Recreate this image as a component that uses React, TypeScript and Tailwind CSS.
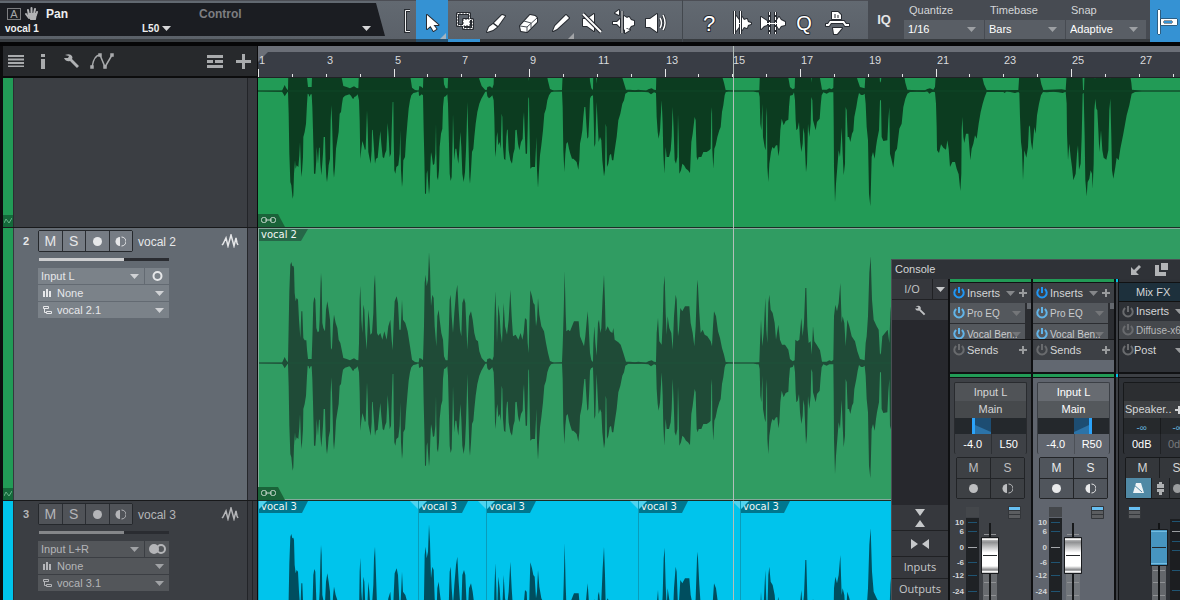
import { useState } from "react";
import type { ReactNode } from "react";

type Segment = { offset: number; points: string };

// Envelope samples, three units per pixel. Each pair is "time,amplitude".
const UPPER: Segment[] = [
	{ offset: -24, points: "24,1 96,1 100,9 104,18 108,10 112,4 114,4 116,110 118,215 121,295 124,303 127,290 130,292 132,285 134,210 137,185 140,195 144,190 147,130 151,75 154,155 157,155 160,75 164,68 169,68 171,40 174,12 179,12 185,12 187,70 190,180 193,198 196,190 199,105 203,92 207,95 209,130 211,220 213,270 215,240 217,120 220,105 225,95 228,160 232,185 236,160 240,130 243,40 246,45 249,115 252,145 257,120 262,105 266,70 271,60 276,35 280,15 290,12 300,8 312,14 320,9 325,8 327,60 329,190 331,232 334,130 337,90 340,175 343,160 346,90 350,40 355,160 358,130 361,85 366,90 370,150 372,230 375,265 378,180 381,90 385,82 391,90 397,70 403,95 410,70 415,110 421,130 425,70 428,38 431,120 434,185 440,200 444,180 448,100 452,100 456,190 459,130 466,120 473,95 480,50 486,10 495,3 503,1 506,1 508,15 514,13 519,8 522,110 524,240 527,265 530,230 534,250 537,332 540,280 543,170 547,205 551,195 554,110 559,50 562,140 566,160 569,130 574,90 579,70 582,20 587,8 593,8 596,80 599,190 602,205 605,140 609,90 613,150 618,210 622,235 626,160 630,100 634,80 637,180 642,195 646,180 649,110 652,40 657,140 663,155 668,130 673,90 678,70 684,65 688,35 695,15 705,4 710,2 712,12 720,14 727,8 731,20 733,130 736,215 739,140 741,60 745,175 749,140 752,90 756,60 761,180 765,110 771,85 776,130 781,220 785,140 789,80 797,85 805,70 812,90 817,70 821,90 825,135 830,130 833,60 836,30 839,150 841,218 846,200 850,180 854,175 858,110 861,130 864,195 868,145 874,110 882,95 888,60 894,30 900,6 912,1 936,2 938,50 941,150 944,275 947,150 949,95 955,100" },
	{ offset: 936, points: "0,95 6,110 12,125 26,125 30,80 36,65 42,50 46,80 50,125 53,155 56,110 60,30 64,8 69,3 70,60 73,110 76,60 80,22 84,120 87,130 91,90 94,105 98,200 102,265 105,180 107,95 113,110 120,95 127,90 130,105 134,70 145,62 152,55 160,30 168,4 180,4 195,2 205,4 228,1 235,5 245,8 252,4 258,3 260,90 264,135 268,65 275,55 278,120 281,230 284,262 287,150 290,85 293,140 298,105 304,90 308,40 312,140 317,205 320,190 324,80 327,100 331,165 337,155 345,170 358,170 362,120 368,90 373,50 377,110 381,230 383,250 388,150 392,90 398,100 404,85 412,80 422,65 426,50 429,110 432,155 438,140 444,95 450,75 456,45 462,25 467,3 490,1 555,1 568,2 570,60 573,130 577,50 581,90 586,195 589,100 592,60 595,180 598,205 602,160 608,150 614,120 618,70 625,115 630,70 636,55 645,55 655,40 660,12 668,5 674,8 676,70 682,65 688,70 694,135 698,80 702,120 706,225 709,225 712,110 716,60 722,65 725,25 729,110 733,65 740,55 750,38 756,4 770,4 778,8 785,5 790,10 792,140 796,175 801,155 806,180 811,240 815,120 818,140 823,120 827,50 832,130 838,110 845,80 855,65 862,35 870,12 884,8 887,60 890,80 894,140 898,270 902,320 906,190 911,130 920,110 926,100 930,25 933,30 937,80 945,90 953,100 958,60 962,170" },
	{ offset: 1296, points: "606,100 625,70 640,60 646,25 652,4 680,2 705,2 712,6 720,8 730,4 735,12 738,60 870,60 876,45 882,20 890,3 940,2 985,3 988,50 1048,50 1054,20 1060,3 1115,5 1127,3 1130,50 1177,60 1179,3 1182,3 1184,60 1212,60 1215,35 1218,60 1258,60 1260,35 1262,60 1318,60 1324,25 1326,4 1355,1 1470,1" },
];

const LOWER: Segment[] = [
	{ offset: -24, points: "24,1 96,2 100,8 104,16 108,10 112,4 114,2 116,68 118,188 121,273 124,283 126,303 128,323 130,313 132,248 135,208 137,233 140,223 145,228 148,193 150,153 153,238 155,258 157,228 159,198 160,138 164,123 168,98 171,38 173,8 176,10 178,18 182,10 185,10 187,48 189,118 191,198 192,248 196,248 199,208 200,168 204,218 207,170 209,170 211,218 214,253 216,228 219,188 221,138 225,138 227,218 229,258 231,273 234,248 236,223 240,203 242,88 244,43 246,88 248,158 250,238 252,260 255,228 258,173 262,148 266,123 269,68 273,63 276,38 279,20 285,14 292,12 298,10 303,14 307,22 310,24 313,18 318,16 323,10 327,28 329,88 331,203 334,173 337,150 341,163 345,178 347,173 349,118 351,58 353,108 355,183 359,203 362,218 365,178 366,118 368,116 371,158 375,218 378,203 383,200 387,158 391,120 394,158 398,198 402,202 405,188 409,178 411,138 413,96 416,138 419,198 423,188 426,88 428,33 430,33 431,138 433,238 436,248 439,228 445,223 449,188 451,118 453,238 456,288 458,268 460,208 465,198 468,148 472,98 476,53 480,28 484,13 490,6 500,4 503,1 506,1 507,14 510,14 515,10 519,13 521,118 523,198 525,308 528,308 530,248 532,238 534,268 537,310 539,288 541,228 543,183 546,198 549,223 553,218 556,188 558,98 559,178 561,258 564,268 567,238 569,168 573,128 577,113 579,48 582,18 587,16 592,10 594,38 596,118 599,248 602,270 605,258 608,138 609,68 611,138 613,208 616,173 619,173 622,198 625,218 628,178 631,123 634,168 637,248 641,273 645,243 648,178 650,118 652,33 655,138 658,258 660,278 663,238 666,183 670,173 673,138 677,98 682,63 688,38 694,23 700,13 705,4 707,1 710,1 712,16 717,22 722,18 727,13 731,28 733,78 735,178 737,198 740,138 742,123 745,163 749,153 752,173 755,68 757,78 759,168 762,203 766,208 769,138 771,116 773,116 776,178 781,208 786,218 790,188 794,173 796,118 800,116 804,158 808,178 813,153 818,143 820,88 822,63 824,118 827,188 831,188 833,118 835,18 837,23 839,138 841,233 846,228 851,228 855,228 858,168 859,138 861,238 864,290 867,238 870,193 874,163 879,118 883,68 888,53 892,28 897,13 903,4 912,1 936,1 938,48 940,178 943,243 946,188 949,158 953,153 957,173 961,188 966,203 970,203 975,208 980,213 985,236 988,208 990,158 994,138 997,118 1000,78 1003,48 1006,48 1009,98 1012,143 1015,138 1018,78 1020,23 1023,16 1026,14 1029,13 1031,78 1033,168 1036,158 1038,88 1040,33 1043,98 1046,153 1050,138 1054,148 1057,208 1062,256 1065,238 1067,98 1069,108 1071,228 1075,218 1079,193 1083,188 1086,208 1090,208 1094,178 1100,138 1105,88 1111,68 1117,38 1122,28 1126,8 1135,2 1155,3 1175,2 1195,4 1203,10 1212,4 1218,6 1220,78 1223,123 1226,143 1230,118 1235,28 1238,98 1240,188 1243,248 1247,168 1250,198 1257,198 1262,178 1265,138 1268,48 1271,118 1274,208 1278,218 1282,198 1284,68 1286,138 1288,248 1293,238 1297,218 1302,223 1308,233 1314,238" },
	{ offset: 1296, points: "0,246 4,153 8,128 14,78 17,88 20,198 23,208 26,198 34,198 40,183 50,183 58,178 62,173 64,68 66,48 67,178 70,233 73,173 77,163 82,138 88,118 92,108 96,63 100,43 104,13 107,4 115,1 190,1 200,4 206,4 209,18 211,98 214,118 217,38 219,138 224,168 227,178 229,78 231,48 232,228 235,273 238,218 243,183 247,168 252,173 258,163 262,163 265,196 268,178 271,118 275,83 281,103 287,90 295,86 297,48 300,14 308,12 312,4 315,28 317,88 319,118 323,113 327,93 330,148 334,183 338,158 340,110 343,128 346,198 348,243 351,218 354,98 358,138 362,98 364,18 367,28 369,88 373,103 377,118 381,93 389,83 392,43 395,13 400,4 410,8 418,4 430,4 431,88 432,228 435,333 438,278 442,228 446,178 450,198 455,110 458,188 461,253 465,218 467,48 470,58 473,138 477,138 481,153 486,128 490,120 493,78 499,48 503,23 507,6 513,12 519,12 524,8 527,38 530,108 534,148 537,308 541,346 543,278 545,198 549,183 554,203 558,168 561,148 567,118 570,28 573,28 575,138 580,150 592,148 595,88 598,48 600,188 604,203 610,230 615,183 621,173 628,113 635,98 640,48 646,23 652,8 660,3 680,2 705,3 708,1 712,1 718,8 724,4 730,2 735,4 738,38 740,108 741,178 747,186 753,160 760,170 768,176 772,148 776,173 780,228 787,213 795,213 800,233 806,250 811,300 814,248 815,118 817,78 820,138 823,156 828,128 835,128 838,168 841,208 845,173 850,158 855,133 860,143 866,98 872,63 878,38 884,18 890,3 940,3 944,6 950,1 975,6 985,3 988,6 990,78 993,153 996,178 999,268 1003,178 1009,200 1014,168 1017,103 1020,108 1023,153 1027,178 1033,108 1037,128 1041,73 1047,38 1053,13 1059,3 1070,4 1090,2 1105,4 1118,6 1127,2 1130,38 1131,128 1134,208 1138,158 1142,198 1146,228 1150,268 1157,248 1161,188 1164,163 1167,236 1172,218 1175,138 1178,8 1181,6 1184,138 1186,268 1190,316 1193,273 1198,263 1202,238 1206,248 1208,293 1211,218 1213,58 1216,23 1219,53 1222,58 1225,118 1228,183 1233,118 1237,178 1241,200 1249,206 1255,178 1258,58 1261,23 1264,138 1266,238 1270,263 1276,228 1280,200 1286,208 1291,173 1300,128 1310,73 1318,43 1325,8 1335,3 1355,1 1470,1" },
];

const envelope = (segments: Segment[], sign: number) =>
	segments
		.flatMap(({ offset, points }) =>
			points.split(" ").map((pair) => {
				const [x, y] = pair.split(",").map(Number);
				return `${x + offset},${y * sign}`;
			})
		)
		.join("L");

const UPPER_PATH = `M0,0L${envelope(UPPER, -1)}L2766,0Z`;
const LOWER_PATH = `M0,0L${envelope(LOWER, 1)}L2766,0Z`;

const Waveform = ({ height, center, color }: { height: number; center: number; color: string }) => (
	<svg width={922} height={height} viewBox={`0 ${-center * 3} 2766 ${height * 3}`} fill={color} className="block max-w-none" aria-hidden="true">
		<path d={UPPER_PATH} />
		<path d={LOWER_PATH} />
		<path d="M0 0H2766" stroke={color} strokeWidth={3} />
		<path d="M0 0H2766" stroke="#2c9b5e" strokeWidth={2} opacity={0.16} />
	</svg>
);

const Caret = ({ className = "" }: { className?: string }) => (
	<svg width="9" height="5" viewBox="0 0 9 5" fill="currentColor" className={`pointer-events-none shrink-0 ${className}`} aria-hidden="true">
		<path d="M0 0h9L4.500 5z" />
	</svg>
);

const Wrench = () => (
	<svg width="16" height="16" viewBox="0 0 16 16" aria-hidden="true">
		<path d="M1 2q5-2 7 1 1 2 0 3l7 7-2 2-7-7q-4 1-6-3h4l1-2z" fill="#b0b2b4" />
	</svg>
);

const Half = () => (
	<svg width="11" height="11" viewBox="0 0 11 11" aria-hidden="true">
		<path d="M5 1a4.500 4.500 0 0 0 0 9z" fill="currentColor" />
		<path d="M6.500 1a4.500 4.500 0 0 1 0 9" fill="none" stroke="currentColor" />
	</svg>
);

const Dot = () => <span className="size-[9px] rounded-full bg-current" />;

const Power = ({ color }: { color: string }) => (
	<svg width="12" height="12" viewBox="0 0 12 12" fill="none" stroke={color} strokeWidth="2" className="shrink-0" aria-hidden="true">
		<path d="M3.200 2a4.700 4.700 0 1 0 5.600 0M6 0v6" />
	</svg>
);

const Plus = () => (
	<svg width="8" height="8" viewBox="0 0 8 8" stroke="currentColor" strokeWidth="2" className="shrink-0" aria-hidden="true">
		<path d="M4 0v8M0 4h8" />
	</svg>
);

const Tool = ({ label, className = "w-8", children }: { label: string; className?: string; children: ReactNode }) => (
	<button aria-label={label} className={`h-[42px] shrink-0 overflow-hidden ${className}`}>
		<svg width="32" height="39" viewBox="0 0 32 39" fill="#fff" stroke="#272b31" strokeWidth="2" strokeLinejoin="round" className="block max-w-none" style={{ paintOrder: "stroke" }}>
			{children}
		</svg>
	</button>
);

const ToolSelect = ({ label, options }: { label: string; options: string[] }) => {
	const id = label.toLowerCase();
	return (
		<div className="flex w-20 flex-col">
			<label htmlFor={id} className="h-5 pl-[5px] text-[11px] leading-5 text-[#d4d6d8]">{label}</label>
			<div className="relative">
				<select id={id} className="block h-[19px] w-full appearance-none bg-[#595e65] pl-1 text-[11px] text-white outline-none">
					{options.map((option) => <option key={option}>{option}</option>)}
				</select>
				<Caret className="absolute top-[7px] right-2 text-[#9da0a4]" />
			</div>
		</div>
	);
};

const ParameterDisplay = () => (
	<div className="relative mt-[3px] h-[33px] w-[385px] shrink-0 bg-[#1b1d22] text-[#eeeff0] [clip-path:polygon(0_0,376px_0,385px_100%,0_100%)]">
		<div className="flex h-[19px] items-center pt-[3px] pl-[7px] text-xs font-bold">
			<span className="flex h-3 w-[14px] items-center justify-center border border-[#7c7d80] text-[11px] font-normal text-[#a5a6a8]">A</span>
			<svg width="14" height="14" viewBox="0 0 14 14" className="ml-1" fill="none" stroke="#b2b3b5" strokeWidth="2" strokeLinecap="round" aria-hidden="true">
				<path d="M4 8L3 3M6.500 7V1M9 7l1-5M11 8l1-3M1 7l3 4" />
				<path d="M4 7h7l-1 5H6z" fill="#b2b3b5" />
			</svg>
			<span className="ml-[7px] w-[153px]">Pan</span>
			<span className="text-[#7d7e81]">Control</span>
		</div>
		<div className="flex h-[13px] items-center pl-[5px] text-[10px] font-bold">
			<span className="w-[137px]">vocal 1</span>
			<button className="flex w-[220px] items-center gap-[3px]">L50 <Caret className="text-[#d5d6d7]" /></button>
			<button aria-label="Control parameter"><Caret className="text-[#d5d6d7]" /></button>
		</div>
	</div>
);

const Toolbar = () => (
	<header className="h-[46px] shrink-0 bg-[#060607] pb-1">
		<div className="flex h-[42px] overflow-hidden bg-[linear-gradient(#4c4e55_1px,#626971_1px,#5b6169_39px,#383c40_39px)]">
			<ParameterDisplay />
			<svg width="31" height="39" viewBox="0 0 31 39" fill="none" className="shrink-0" aria-hidden="true">
				<path d="M25 10.500h-4.500v21H25" stroke="#272b31" strokeWidth="3" />
				<path d="M25 10.500h-4.500v21H25" stroke="#f0f1f2" />
			</svg>
			<Tool label="Arrow" className="w-8 bg-[linear-gradient(#3592d3_39px,#27516f_39px)]">
				<path d="M11 13v14l3.500-3 3 5 3-2-3-4h5z" />
				<path d="M30 31v6h-6z" fill="#a4b3bf" stroke="none" />
			</Tool>
			<Tool label="Range" className="w-8 border-b-[3px] border-[#3592d3]">
				<g fill="none">
					<path d="M9.500 13.500h12v12h-12zM15.500 19.500h9v9h-9z" strokeWidth="3" />
					<path d="M9.500 13.500h12v12h-12zM15.500 19.500h9v9h-9z" stroke="#fff" strokeWidth="1" strokeDasharray="2 1" />
				</g>
				<path d="M16 20h5v5h-5z" stroke="none" />
			</Tool>
			<Tool label="Split">
				<path d="M22 13l3 1-7 10-4-3z" />
				<path d="M13 22l4 3-4 3-6 2 2-5z" />
			</Tool>
			<Tool label="Eraser">
				<path d="M18 13l5 1 2 2v4L15 30l-6-1-1-5z" />
				<path d="M8 24l7 1 10-9M15 25v5M12 19l7 2v5" fill="none" stroke="#4a4f56" strokeWidth="1" />
			</Tool>
			<Tool label="Paint">
				<path d="M22 13l3 3-12 11-4 2 2-5z" />
				<path d="M30 31v6h-6z" fill="#a2a4a7" stroke="none" />
			</Tool>
			<Tool label="Mute">
				<path d="M7 17h4l7-5v17l-7-5H7z" />
				<path d="M7 12l18 18" fill="none" strokeWidth="4" />
				<path d="M7 12l18 18" fill="none" stroke="#fff" strokeWidth="2" />
			</Tool>
			<Tool label="Bend">
				<path d="M5 20h4l3-3v8l-3-3H5zM16 14l3 2 2-1 2 3 3 1v4l-3 1-2 3-2-1-3 2zM11 8v5l-4-2zM17 26l5 2-5 3z" />
				<path d="M14 9v22" strokeWidth="3" />
				<path d="M14 9v22" stroke="#fff" strokeWidth="1" />
			</Tool>
			<Tool label="Listen">
				<path d="M6 17h4l7-5v18l-7-5H6z" />
				<path d="M20 16q3 5 0 10M23 13q4 8 0 15" fill="none" strokeWidth="3" />
				<path d="M20 16q3 5 0 10M23 13q4 8 0 15" fill="none" stroke="#fff" strokeWidth="1.500" />
			</Tool>
			<div className="mr-[10px] ml-[10px] w-px shrink-0 bg-[#43484e]" />
			<Tool label="Help"><text x="16" y="29" textAnchor="middle" fontSize="22">?</text></Tool>
			<Tool label="Audio bend">
				<path d="M11 14l3 4v7l-3 4zM17 15l2 3 3-1 1 3 3 1v1l-3 1-1 3-3-1-2 3z" />
				<path d="M9.500 9v23M15.500 9v23" strokeWidth="3" />
				<path d="M9.500 9v23M15.500 9v23M12 21.500h4" stroke="#fff" strokeWidth="1" />
			</Tool>
			<Tool label="Strip silence">
				<path d="M4 15l3 2 3 2v4l-3 1-3 3zM20 18l2-3 2 3 4 2v3l-4 1-2 3-2-3z" />
				<path d="M12.500 10v22M18.500 10v22" strokeWidth="3" />
				<path d="M12.500 10v22M18.500 10v22" stroke="#fff" strokeWidth="1" strokeDasharray="3 2" />
				<path d="M10 21.500h10" stroke="#fff" strokeWidth="1" />
			</Tool>
			<Tool label="Quantize panel"><text x="15" y="28" textAnchor="middle" fontSize="20">Q</text></Tool>
			<Tool label="Macros">
				<path d="M11 10h6l3 3v4h-9z" />
				<path d="M14 12v4M17 13v3" strokeWidth="1" />
				<path d="M5 24h3l2-3h12l2 3h4v-2h-3l-2-3H9l-2 3H5zM12 26h9l-5 6h-3z" />
			</Tool>
			<div className="ml-[15px] flex h-[39px] grow bg-[#474b52]">
				<button className="w-9 shrink-0 pr-1 text-[13px] font-bold text-[#e4e5e6]">IQ</button>
				<div className="flex gap-px">
					<ToolSelect label="Quantize" options={["1/16", "1/8", "1/4"]} />
					<ToolSelect label="Timebase" options={["Bars", "Seconds", "Frames"]} />
					<ToolSelect label="Snap" options={["Adaptive", "Bar", "Quantize"]} />
				</div>
			</div>
			<Tool label="Snap to grid" className="w-[30px] bg-[#3592d3]">
				<path d="M8 8h2v24H8zM11 17h16v6H11z" strokeWidth="1" />
				<path d="M14 19h8v2h-8z" fill="#3592d3" strokeWidth="1" />
			</Tool>
		</div>
	</header>
);

const TrackListHeader = () => (
	<div className="flex h-8 items-center border-b-2 border-[#0c0c0d] bg-[#27292c] text-[#a9abad]">
		<button aria-label="Track list" className="ml-[5px]">
			<svg width="16" height="12" viewBox="0 0 16 12" stroke="currentColor" strokeWidth="2"><path d="M0 1h16M0 4.500h16M0 8h16M0 11.500h16" /></svg>
		</button>
		<button aria-label="Inspector" className="ml-[17px]">
			<svg width="4" height="16" viewBox="0 0 4 16" fill="currentColor"><path d="M0 1h4v3H0zM0 6h4v10H0z" /></svg>
		</button>
		<button aria-label="Options" className="ml-[19px]"><Wrench /></button>
		<button aria-label="Automation" className="ml-[10px]">
			<svg width="24" height="16" viewBox="0 0 24 16" fill="none" stroke="currentColor" strokeWidth="1.500">
				<path d="M2 14Q4 2 10 2l5 12 7-12" />
				<path d="M1 13h2v2H1zM9 1h2v2H9zM14 13h2v2h-2zM21 1h2v2h-2z" fill="currentColor" />
			</svg>
		</button>
		<button aria-label="Track presets" className="ml-[93px]">
			<svg width="16" height="13" viewBox="0 0 16 13" stroke="currentColor" strokeWidth="3"><path d="M0 1.500h16M0 6.500h6M8 6.500h8M0 11.500h16" /></svg>
		</button>
		<button aria-label="Add track" className="ml-[13px]">
			<svg width="15" height="15" viewBox="0 0 15 15" stroke="currentColor" strokeWidth="3"><path d="M7.500 0v15M0 7.500h15" /></svg>
		</button>
	</div>
);

const AutomationTab = () => (
	<button aria-label="Show automation" className="absolute bottom-0 left-0 flex h-3 w-[10px] items-center justify-center bg-[#14693a]">
		<svg width="8" height="6" viewBox="0 0 8 6" fill="none" stroke="#67b388"><path d="M0 5l2-4 3 4 3-5" /></svg>
	</button>
);

type Track = { number: number; name: string; input: string; take: string; stereo: boolean; selected: boolean };

const SlotSelect = ({ label, value, selected, icon }: { label: string; value: string; selected: boolean; icon?: ReactNode }) => (
	<div className={`relative h-4 min-w-0 grow ${selected ? "bg-[#7b8289]" : "bg-[#53565a]"}`}>
		{icon && <span className="pointer-events-none absolute top-1 left-[5px]">{icon}</span>}
		<select aria-label={label} className={`block h-4 w-full appearance-none bg-transparent text-[11px] leading-4 outline-none ${icon ? "pl-[19px]" : "pl-[3px]"}`}>
			<option>{value}</option>
		</select>
		<Caret className="absolute top-[6px] right-[5px] opacity-80" />
	</div>
);

const TrackControls = ({ track }: { track: Track }) => {
	const { selected } = track;
	const [volume, setVolume] = useState(65);
	const cell = `flex items-center justify-center ${selected ? "bg-[#767c84]" : "bg-[#505358]"}`;

	return (
		<div className={`flex grow pt-[2px] ${selected ? "bg-[#636a72] text-[#e6e7e9]" : "bg-[#3b3e43] text-[#b4b5b8]"}`}>
			<span className="w-6 pl-[9px] text-[11px] leading-[22px] font-bold">{track.number}</span>
			<div className="grow">
				<div className="flex h-[22px] items-center">
					<div className="grid h-[22px] w-[95px] grid-cols-4 gap-px rounded-xs border border-[#25282c] bg-[#2b2e33] text-sm">
						<button className={cell}>M</button>
						<button className={cell}>S</button>
						<button aria-label="Record" className={cell}><Dot /></button>
						<button aria-label="Monitor" className={cell}><Half /></button>
					</div>
					<span className="ml-[5px] grow pt-px text-xs">{track.name}</span>
					<svg width="18" height="14" viewBox="0 0 18 14" fill="none" stroke="currentColor" strokeWidth="1.500" className="mr-2" aria-hidden="true">
						<path d="M1 11l1-1 3-6 2 8 3-11 3 11 2-8 1 5 1 2" />
					</svg>
				</div>
				<div className="relative mt-[6px] ml-px h-[3px] w-[130px] bg-[#2a2c31]">
					<div className={`h-full ${selected ? "bg-[#cdced0]" : "bg-[#85878a]"}`} style={{ width: `${volume}%` }} />
					<input type="range" aria-label={`${track.name} volume`} value={volume} onChange={(e) => setVolume(Number(e.target.value))} className="absolute inset-0 h-full w-full opacity-0" />
				</div>
				<div className="mt-[7px] flex w-[131px] flex-col gap-px">
					<div className="flex gap-px">
						<SlotSelect label="Input" value={track.input} selected={selected} />
						<button aria-label="Channel mode" className={`flex h-4 w-6 items-center justify-center ${selected ? "bg-[#7b8289]" : "bg-[#53565a]"}`}>
							<svg width="17" height="10" viewBox="0 0 17 10" fill="none" stroke="currentColor" strokeWidth="2">
								{track.stereo ? <><circle cx="5" cy="5" r="4" fill="currentColor" /><circle cx="12" cy="5" r="4" /></> : <circle cx="8.500" cy="5" r="4" />}
							</svg>
						</button>
					</div>
					<SlotSelect
						label="Instrument"
						value="None"
						selected={selected}
						icon={<svg width="8" height="8" viewBox="0 0 8 8" stroke="currentColor" strokeWidth="2"><path d="M1 2v6M4 0v8M7 2v6" /></svg>}
					/>
					<SlotSelect
						label="Layer"
						value={track.take}
						selected={selected}
						icon={<svg width="9" height="8" viewBox="0 0 9 8" fill="none" stroke="currentColor"><path d="M.5.5h5v2h-5zM3.500 5.500h5v2h-5zM1.500 3v3.500h2" /></svg>}
					/>
				</div>
			</div>
		</div>
	);
};

const TrackList = () => (
	<aside className="flex w-[258px] shrink-0 flex-col border-r border-l-[3px] border-[#0c0c0d]">
		<TrackListHeader />
		<div className="relative flex h-[150px] shrink-0 border-b border-[#18191b] bg-[#3b3e43]">
			<div className="w-[11px] border-r border-[#2b2d31] bg-[#229b56]" />
			<div className="grow" />
			<div className="w-[10px] border-l border-[#222428] bg-[#37393e]" />
			<AutomationTab />
		</div>
		<div className="relative flex h-[273px] shrink-0 border-b border-[#18191b]">
			<div className="w-[11px] border-r border-[#35383d] bg-[#229b56]" />
			<TrackControls track={{ number: 2, name: "vocal 2", input: "Input L", take: "vocal 2.1", stereo: false, selected: true }} />
			<div className="w-[10px] border-l border-[#25272b] bg-[#474952]" />
			<AutomationTab />
		</div>
		<div className="flex min-h-0 grow overflow-hidden">
			<div className="w-[11px] shrink-0 border-r border-[#2b2d31] bg-[#00c4ec]" />
			<TrackControls track={{ number: 3, name: "vocal 3", input: "Input L+R", take: "vocal 3.1", stereo: true, selected: false }} />
			<div className="w-[10px] shrink-0 border-l border-[#222428] bg-[#37393e]"><div className="ml-1 h-full w-px bg-[#222428]" /></div>
		</div>
	</aside>
);

const BAR_WIDTH = 33.875;

const Ruler = () => (
	<div className="h-8 shrink-0 overflow-hidden border-t-[6px] border-b border-t-[#6b6f77] border-b-[#202225] bg-[#393d45]">
		<svg width="922" height="25" viewBox="0 0 922 25" fontSize="11" fill="#d8dadc" className="block max-w-none">
			<path d="M0 0h10L0 10z" fill="#6b6f77" />
			{Array.from({ length: 28 }, (_, i) => {
				const x = Math.round(i * BAR_WIDTH);
				const top = i % 4 == 0 ? 17 : 22;
				return (
					<g key={i}>
						<rect x={x} y={top} width="1" height={25 - top} fill="#e6e7e8" />
						{i % 2 == 0 && <text x={x + 1} y="12">{i + 1}</text>}
					</g>
				);
			})}
		</svg>
	</div>
);

const LinkBadge = () => (
	<div className="absolute bottom-0 left-0 flex h-[13px] w-[27px] items-center bg-[#1a6339] pb-px pl-[3px] [clip-path:polygon(0_0,20px_0,27px_100%,0_100%)]">
		<svg width="15" height="6" viewBox="0 0 15 6" fill="none" stroke="#c5d5cb" aria-hidden="true">
			<rect x=".5" y=".5" width="5" height="5" rx="2" />
			<rect x="9.500" y=".5" width="5" height="5" rx="2" />
			<path d="M4 3h7" />
		</svg>
	</div>
);

const ClipLabel = ({ name, color }: { name: string; color: string }) => (
	<div className={`h-[12px] w-[49px] pl-[2px] font-['DejaVu_Sans',sans-serif] text-[10px] leading-[11px] whitespace-nowrap text-[#f1f5f3] ${color}`}>{name}</div>
);

// Start and width of each take on the third track; the last one runs on
const TAKES = [
	{ start: 0, width: 160 },
	{ start: 160, width: 68 },
	{ start: 228, width: 152 },
	{ start: 380, width: 102 },
	{ start: 482, width: 440 },
];

const Arrangement = () => (
	<main className="relative flex min-w-0 grow flex-col overflow-hidden">
		<Ruler />
		<div className="relative h-[150px] shrink-0 overflow-hidden border-b border-[#1c2e26] bg-[#229b56]">
			<Waveform height={149} center={13} color="#0c3c20" />
			<LinkBadge />
		</div>
		<div className="relative h-[273px] shrink-0 overflow-hidden border-b border-[#1c2e26] bg-[#309c62]">
			<Waveform height={272} center={135} color="#1f4b37" />
			<div className="absolute inset-0 border-y border-l border-[#84a99b]" />
			<div className="absolute top-px left-px"><ClipLabel name="vocal 2" color="bg-[#266748] [clip-path:polygon(0_0,100%_0,42px_100%,0_100%)]" /></div>
			<LinkBadge />
		</div>
		<div className="relative min-h-0 grow overflow-hidden bg-[#00c4ec]">
			<Waveform height={110} center={134} color="#004e5f" />
			{TAKES.map(({ start, width }) => (
				<div key={start} className="absolute inset-y-0 border-l border-[#0a9cba]" style={{ left: start, width }}>
					<ClipLabel name="vocal 3" color="bg-[#00768e] [clip-path:polygon(7px_0,100%_0,43px_100%,0_100%,0_8px)]" />
					<span className="absolute top-0 left-0 size-2 bg-[#4fd3ef] [clip-path:polygon(0_0,100%_0,0_100%)]" />
					<span className="absolute top-0 right-0 size-2 bg-[#4fd3ef] [clip-path:polygon(0_0,100%_0,100%_100%)]" />
				</div>
			))}
		</div>
		<div className="pointer-events-none absolute inset-y-0 left-[475px] w-px bg-[#b3beb9]" />
	</main>
);

const SCALE = [
	{ label: "10", y: 22 },
	{ label: "6", y: 31 },
	{ label: "0", y: 47 },
	{ label: "-6", y: 62 },
	{ label: "-12", y: 75 },
	{ label: "-24", y: 91 },
];

const FaderCap = ({ x, y, fill, edge }: { x: number; y: number; fill: string; edge: string }) => (
	<g>
		<rect x={x} y={y} width="18" height="37" rx="1" fill="#191b1e" />
		<rect x={x + 1} y={y + 1} width="16" height="35" fill={fill} />
		<path d={`M${x + 1} ${y + 2.5}h16M${x + 1} ${y + 34.5}h16`} stroke={edge} />
		<path d={`M${x + 2} ${y + 18.5}h14`} stroke="#24272a" />
	</g>
);

const RoutingGlyph = ({ x }: { x: number }) => (
	<g>
		<rect x={x - 1} y="6" width="13" height="13" rx="1" fill="#33363a" />
		<rect x={x} y="7" width="11" height="3" fill="#67bff2" />
		<path d={`M${x} 12.500h11M${x} 16.500h11`} stroke="#5b5d60" strokeWidth="3" />
	</g>
);

const Fader = ({ name }: { name: string }) => {
	const [level, setLevel] = useState(70);
	return (
		<div className="relative pt-px">
			<svg width="81" height="110" viewBox="0 0 81 110" fontSize="8" fontWeight="bold" fill="#d3d5d7" className="block">
				<defs>
					<linearGradient id="cap" x2="0" y2="1">
						<stop offset="0" stopColor="#d8d8d8" />
						<stop offset=".12" stopColor="#8f9092" />
						<stop offset=".42" stopColor="#fff" />
						<stop offset=".8" stopColor="#fff" />
						<stop offset=".9" stopColor="#8f9092" />
						<stop offset="1" stopColor="#d8d8d8" />
					</linearGradient>
				</defs>
				<rect x="16" y="7" width="13" height="10" fill="#44474b" />
				<rect x="16" y="18" width="13" height="92" fill="#1f2225" />
				<path d="M33 74h14v36H33z" fill="#7b7d80" opacity=".7" />
				<path d="M34 34.500h12M34 37.500h12M34 82.500h12M34 95.500h12" stroke="#8f9194" />
				<rect x="39" y="23" width="2" height="87" fill="#17191b" />
				{SCALE.map(({ label, y }) => (
					<g key={label}>
						<text x="14" y={y + 3} textAnchor="end">{label}</text>
						<rect x="18" y={y} width="9" height="1" fill={label == "0" ? "#a4a7aa" : "#1f5472"} />
					</g>
				))}
				<RoutingGlyph x={59} />
				<FaderCap x={31} y={37} fill="url(#cap)" edge="#f6f6f6" />
			</svg>
			<input type="range" aria-label={`${name} level`} value={level} onChange={(e) => setLevel(Number(e.target.value))} className="absolute inset-y-0 left-[31px] w-[18px] opacity-0" />
		</div>
	);
};

const InsertRow = ({ name }: { name: string }) => (
	<div className="relative flex h-5 shrink-0 items-center bg-[#54585d] pl-[3px] text-[10px] text-[#c9cbcd]">
		<Caret className="absolute right-1 text-[#747679]" />
		<Power color="#62b4e8" />
		<span className="relative ml-[2px] whitespace-nowrap">{name}</span>
	</div>
);

const Channel = ({ side, selected }: { side: "L" | "R"; selected: boolean }) => {
	const name = `Channel ${side}`;
	const cell = `flex items-center justify-center ${selected ? "bg-[#50555c] text-[#e9eaeb]" : "bg-[#3d4044] text-[#bdbec0]"}`;

	return (
		<section aria-label={name} className="w-[81px] shrink-0 text-[11px] text-[#d4d5d6]">
			<div className="h-1 border-b border-[#101113] bg-[#229b56]" />
			<div className="flex h-5 items-center bg-[#3d4045] pr-1 pl-[3px]">
				<Power color="#2196f3" />
				<span className="ml-[2px] grow">Inserts</span>
				<Caret className="mr-1 text-[#85878a]" />
				<span className="text-[#999b9d]"><Plus /></span>
			</div>
			<div className="relative flex h-9 flex-col gap-px overflow-hidden bg-[#2b2d31] pr-[6px]">
				<InsertRow name="Pro EQ" />
				<InsertRow name="Vocal Ben.." />
				<div className="absolute top-0 right-0 h-[6px] w-1 bg-[#64686e]" />
			</div>
			<div className="flex h-[21px] items-center border-t border-[#17181a] bg-[#3d4045] pr-1 pl-[3px]">
				<Power color="#696b6e" />
				<span className="ml-[2px] grow">Sends</span>
				<span className="text-[#999b9d]"><Plus /></span>
			</div>
			<div className={`h-[12px] ${selected ? "bg-[#626871]" : "bg-[#3d4045]"}`} />
			<div className="h-[6px] border-t-2 border-b border-[#101113] bg-[#229b56]" />
			<div className={`pt-1 ${selected ? "bg-[#60656e]" : "bg-[#3e4146]"}`}>
				<div className={`mx-1 overflow-hidden rounded-xs border border-b-0 text-center ${selected ? "border-[#3b3f45]" : "border-[#292b2f]"}`}>
					<div className={`h-[18px] leading-[18px] ${selected ? "bg-[#676b71] text-white" : "bg-[#505357]"}`}>Input L</div>
					<div className={`h-[17px] leading-[17px] ${selected ? "bg-[#54585c] text-white" : "bg-[#46494c]"}`}>Main</div>
					<svg width="71" height="16" viewBox="0 0 71 16" className="block bg-[#24282c]" aria-hidden="true">
						{side == "L" ? (
							<><path d="M17 0h19v16H17z" fill="#1d4d72" /><path d="M20 7l16 7v2H20z" fill="#2c73a8" /><path d="M17 0h3v16h-3z" fill="#2ba3fa" /></>
						) : (
							<><path d="M36 0h18v16H36z" fill="#1d4d72" /><path d="M51 7l-15 7v2h15z" fill="#2c73a8" /><path d="M51 0h3v16h-3z" fill="#2ba3fa" /></>
						)}
					</svg>
					<div className="grid h-5 grid-cols-2 text-[11px] leading-5 text-white">
						<span>-4.0</span>
						<span className={`border-l ${selected ? "border-[#4c5057]" : "border-[#2d3034]"}`}>{side}50</span>
					</div>
				</div>
				<div className="mx-[6px] mt-[3px] grid h-[42px] grid-cols-2 grid-rows-2 gap-px rounded-xs border border-[#222427] bg-[#222427] text-xs">
					<button className={cell}>M</button>
					<button className={cell}>S</button>
					<button aria-label="Record" className={cell}><Dot /></button>
					<button aria-label="Monitor" className={cell}><Half /></button>
				</div>
				<Fader name={name} />
			</div>
		</section>
	);
};

const MixChannel = () => {
	const [level, setLevel] = useState(75);
	return (
		<section aria-label="Main output" className="-ml-px w-[81px] shrink-0 bg-[#2e3136] text-[11px] text-[#d4d5d6]">
			<div className="h-1 border-b border-[#101113]" />
			<button className="flex h-[18px] w-full items-center bg-[#1d303c] pl-[17px]">Mix FX</button>
			<div className="flex h-5 items-center border-t border-[#111] pl-[3px]">
				<Power color="#696b6e" />
				<span className="ml-[2px]">Inserts</span>
				<Caret className="ml-[6px] text-[#999b9d]" />
			</div>
			<div className="flex h-[18px] items-center bg-[#45484c] pl-[3px] text-[10px] whitespace-nowrap text-[#b5b7b9]">
				<Power color="#696b6e" />
				<span className="ml-[2px]">Diffuse-x64</span>
			</div>
			<div className="flex h-[21px] items-center border-t border-[#17181a] pl-[3px]">
				<Power color="#696b6e" />
				<span className="w-[41px]">Post</span>
				<Caret className="text-[#999b9d]" />
			</div>
			<div className="h-[12px]" />
			<div className="h-[6px] border-t-2 border-b border-[#101113] bg-[#3d4045]" />
			<div className="mx-1 mt-1 rounded-xs border border-b-0 border-[#17191b]">
				<div className="h-[18px] bg-[#2c2e31]" />
				<div className="flex h-[17px] items-center gap-1 bg-[#3d3f42] pl-px whitespace-nowrap"><span>Speaker..</span><Plus /></div>
				<div className="grid h-4 grid-cols-2 bg-[#26292c] text-center text-[10px] leading-5 text-[#5faad2]"><span>-∞</span><span className="border-l border-[#191b1d]">-∞</span></div>
				<div className="grid h-5 grid-cols-2 text-center leading-5"><span className="text-white">0dB</span><span className="border-l border-[#202225] text-[#77797c]">0dB</span></div>
			</div>
			<div className="mt-[3px] ml-[6px] w-[69px] rounded-xs border border-[#17191b] bg-[#1b1d20]">
				<div className="grid h-5 grid-cols-2 gap-px text-xs">
					<button className="bg-[#34373b]">M</button>
					<button className="bg-[#34373b]">S</button>
				</div>
				<div className="flex h-5 gap-px">
					<button aria-label="Metronome" className="w-[25px] bg-[#5089a5]">
						<svg width="25" height="20" viewBox="0 0 25 20" fill="#eef3f6"><path d="M10 5h5l3 10H7z" /><path d="M7 6l9 8" stroke="#5089a5" /></svg>
					</button>
					<button aria-label="Fader mode" className="w-[17px] bg-[#34373b]">
						<svg width="17" height="20" viewBox="0 0 17 20" fill="#aeb0b2"><path d="M7 4h3v2h2v4H5V6h2zM5 11h7v3h-2v3H7v-3H5z" /></svg>
					</button>
					<button aria-label="Record" className="flex grow items-center bg-[#34373b] pl-[3px] text-[#9b9d9f]"><Dot /></button>
				</div>
			</div>
			<div className="relative pt-px">
				<svg width="81" height="110" viewBox="0 0 81 110" className="block">
					<rect x="51" y="19" width="30" height="91" fill="#1c1e21" />
					<path d="M53 31.500h9" stroke="#9a9da0" />
					<path d="M53 21.500h9M53 41.500h9M53 50.500h9M53 70.500h9M53 90.500h9" stroke="#1f5472" />
					<path d="M33 65h14v45H33z" fill="#64676b" />
					<path d="M34 70.500h12M34 82.500h12M34 95.500h12" stroke="#8f9194" />
					<rect x="39" y="23" width="2" height="87" fill="#121416" />
					<RoutingGlyph x={10} />
					<FaderCap x={31} y={29} fill="#4795c0" edge="#73bde2" />
				</svg>
				<input type="range" aria-label="Main level" value={level} onChange={(e) => setLevel(Number(e.target.value))} className="absolute inset-y-0 left-[31px] w-[18px] opacity-0" />
			</div>
		</section>
	);
};

const Console = () => (
	<div className="absolute top-[213px] right-0 bottom-0 flex w-[289px] flex-col overflow-hidden border-t border-l border-[#4b4f54] bg-[#0f1012] text-[#d4d5d6]">
		<div className="flex h-[19px] shrink-0 items-center bg-[#2f3237] pl-[3px] text-[11px]">
			<h2 className="grow">Console</h2>
			<button aria-label="Dock" className="mr-[13px]">
				<svg width="11" height="11" viewBox="0 0 11 11" fill="#b2b4b6"><path d="M0 11V3l3 3 5-5 2 2-5 5 3 3z" /></svg>
			</button>
			<button aria-label="Detach" className="mr-3">
				<svg width="13" height="13" viewBox="0 0 13 13" fill="#b2b4b6"><path d="M6 0h7v7H6zM0 2h4v7h7v4H0z" /></svg>
			</button>
		</div>
		<div className="flex min-h-0 grow gap-[2px]">
			<nav className="flex w-14 shrink-0 flex-col bg-[#27282d] font-['Open_Sans',sans-serif] text-[11px] text-[#c6c8ca]">
				<div className="flex h-[22px] gap-px border-b border-[#202124] bg-[#202124]">
					<button className="grow bg-[#36383d]">I/O</button>
					<button aria-label="Views" className="flex w-[15px] items-center justify-center bg-[#36383d]"><Caret /></button>
				</div>
				<button aria-label="Console options" className="flex h-[21px] items-center justify-center bg-[#36383d]">
					<svg width="11" height="11" viewBox="0 0 16 16" fill="#c0c2c4"><path d="M1 2q5-2 7 1 1 2 0 3l7 7-2 2-7-7q-4 1-6-3h4l1-2z" /></svg>
				</button>
				<div className="h-[185px] shrink-0" />
				<button aria-label="Collapse vertically" className="flex h-[25px] shrink-0 items-center justify-center bg-[#36383d]">
					<svg width="10" height="18" viewBox="0 0 10 18" fill="currentColor"><path d="M0 0h10L5 7zM0 18h10l-5-7z" /></svg>
				</button>
				<button aria-label="Collapse horizontally" className="flex h-[26px] shrink-0 items-center justify-center border-t border-[#202124] bg-[#36383d]">
					<svg width="18" height="10" viewBox="0 0 18 10" fill="currentColor"><path d="M0 0v10l7-5zM18 0v10l-7-5z" /></svg>
				</button>
				<button className="h-[22px] shrink-0 border-t border-[#202124] bg-[#36383d]">Inputs</button>
				<button className="h-[22px] shrink-0 border-t border-[#202124] bg-[#36383d]">Outputs</button>
			</nav>
			<Channel side="L" selected={false} />
			<Channel side="R" selected />
			<div className="w-[2px] shrink-0 bg-[#3d4045]">
				<div className="h-[3px] bg-[#00c4ec]" />
				<div className="mt-[92px] h-[3px] bg-[#00c4ec]" />
			</div>
			<MixChannel />
		</div>
	</div>
);

export default function App() {
	return (
		<div className="flex h-screen flex-col overflow-hidden bg-[#0c0c0d] font-['Liberation_Sans',Arial,sans-serif]">
			<Toolbar />
			<div className="relative flex min-h-0 grow">
				<TrackList />
				<Arrangement />
				<Console />
			</div>
		</div>
	);
}
